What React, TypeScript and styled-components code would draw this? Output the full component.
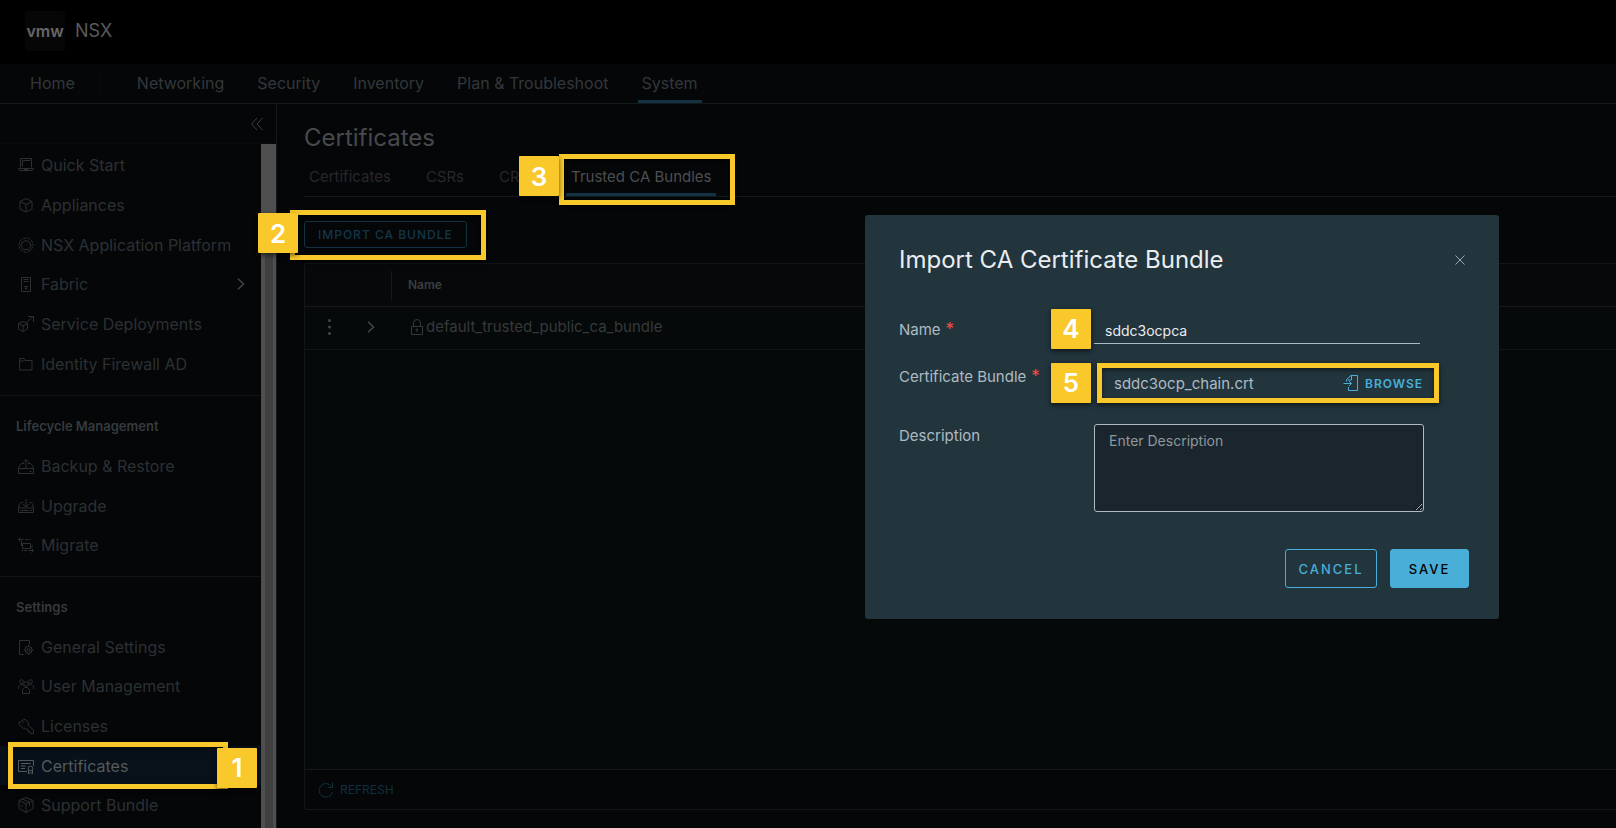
import React from 'react';
import styled, { createGlobalStyle, css } from 'styled-components';

const sans = "Inter, 'Open Sans', sans-serif";

const GlobalStyle = createGlobalStyle`
  *, *::before, *::after { box-sizing: border-box; }
  body {
    margin: 0;
    background: #050608;
    color: #32383a;
    font-family: ${sans};
    font-size: 15px;
    line-height: 24px;
    overflow: hidden;
  }
  button, input, textarea { font-family: inherit; }
  a { color: inherit; text-decoration: none; }
`;

/* ---------- shell ---------- */

const Page = styled.div`
  position: relative;
  display: flex;
  flex-direction: column;
  height: 100vh;
`;

const TopBar = styled.header`
  flex: none;
  display: flex;
  align-items: center;
  gap: 10px;
  height: 64px;
  padding: 0 25px 2px;
  background: #000;
`;

const Logo = styled.span`
  display: flex;
  align-items: center;
  justify-content: center;
  width: 40px;
  height: 40px;
  border-radius: 3px;
  background: #060606;
  color: #686868;
  font-size: 16px;
  font-weight: 600;
`;

const Product = styled.span`
  color: #5a5a5a;
  font-size: 18px;
`;

const MainNav = styled.nav`
  flex: none;
  display: flex;
  gap: 25px;
  height: 40px;
  padding: 0 26px;
  border-bottom: 1px solid #15191c;
`;

const NavLink = styled.a<{ $active?: boolean; $home?: boolean }>`
  padding: 7px 4px 0;
  font-size: 16px;
  line-height: 24px;
  border-bottom: 3px solid ${(p) => (p.$active ? '#133344' : 'transparent')};
  ${(p) =>
    p.$home &&
    css`
      position: relative;
      margin-right: 29px;
      &::after {
        content: '';
        position: absolute;
        right: -22px;
        top: 11px;
        width: 1px;
        height: 18px;
        background: #0a0c0e;
      }
    `}
`;

const Body = styled.div`
  flex: 1;
  min-height: 0;
  display: flex;
`;

/* ---------- side bar ---------- */

const SideBar = styled.aside`
  flex: none;
  display: flex;
  flex-direction: column;
  width: 277px;
  border-right: 1px solid #15191c;
`;

const CollapseBar = styled.div`
  flex: none;
  display: flex;
  align-items: center;
  justify-content: flex-end;
  height: 40px;
  padding-right: 12px;
  border-bottom: 1px solid #080b0c;
`;

const IconButton = styled.button`
  display: flex;
  padding: 0;
  border: 0;
  background: none;
  color: inherit;
`;

const SideScroll = styled.div`
  flex: 1;
  min-height: 0;
  display: flex;
  overflow: hidden;
`;

const SideList = styled.nav`
  flex: 1;
  padding-top: 1px;
`;

const ScrollTrack = styled.div`
  flex: none;
  width: 15px;
  padding: 90px 3px 0 4px;
  background: #4f4f4f;
`;

const ScrollThumb = styled.div`
  height: 100%;
  background: #3f3f3f;
`;

const Group = styled.section`
  & + & {
    margin-top: 11px;
    padding-top: 18px;
    border-top: 1px solid #121517;
  }
`;

const GroupTitle = styled.h2`
  margin: 0 0 8px;
  padding-left: 16px;
  color: #353b3e;
  font-size: 13px;
  font-weight: 600;
  line-height: 24px;
`;

const GroupItems = styled.div<{ $height: number }>`
  display: flex;
  flex-direction: column;
  height: ${(p) => p.$height}px;
`;

const Item = styled.a<{ $active?: boolean }>`
  position: relative;
  flex: 1;
  display: flex;
  align-items: center;
  gap: 7px;
  padding: 0 16px 0 18px;
  font-size: 16px;
  color: ${(p) => (p.$active ? '#545a5c' : '#2b3133')};
  background: ${(p) => (p.$active ? '#08101a' : 'transparent')};
`;

const ItemLabel = styled.span`
  flex: 1;
`;

/* ---------- content ---------- */

const Content = styled.main`
  flex: 1;
  min-width: 0;
  display: flex;
  flex-direction: column;
  padding: 19px 0 18px 27px;
`;

const Title = styled.h1`
  margin: 0 0 6px;
  color: #474a4c;
  font-size: 24px;
  font-weight: 400;
  line-height: 30px;
`;

const Tabs = styled.div`
  display: flex;
  gap: 25px;
  border-bottom: 1px solid #12191d;
`;

const Tab = styled.button<{ $active?: boolean }>`
  position: relative;
  height: 37px;
  padding: 1px 5px 0;
  border: 0;
  border-bottom: 3px solid ${(p) => (p.$active ? '#133344' : 'transparent')};
  background: none;
  color: ${(p) => (p.$active ? '#4c4f51' : '#25292b')};
  font-size: 15px;
  white-space: nowrap;
`;

const Toolbar = styled.div`
  display: flex;
  padding: 24px 0 15px;
`;

const ImportButton = styled.button`
  position: relative;
  height: 27px;
  padding: 0 13px;
  border: 1px solid #12303f;
  border-radius: 3px;
  background: none;
  color: #14364a;
  font-size: 12px;
  font-weight: 500;
  letter-spacing: 1px;
`;

const Grid = styled.div`
  flex: 1;
  display: flex;
  flex-direction: column;
  border: 1px solid #121618;
  border-right: 0;
  border-radius: 3px 0 0 3px;
`;

const GridBody = styled.div`
  flex: 1;
  background: #050909;
`;

const Table = styled.table`
  width: 100%;
  border-collapse: collapse;
  text-align: left;
`;

const HeadCell = styled.th<{ $control?: boolean }>`
  position: relative;
  width: ${(p) => (p.$control ? '87px' : 'auto')};
  height: 42px;
  padding: 0 0 0 16px;
  background: #06080a;
  border-bottom: 1px solid #15191b;
  color: #3a3f41;
  font-size: 12px;
  font-weight: 600;
  ${(p) =>
    p.$control &&
    css`
      &::after {
        content: '';
        position: absolute;
        right: 0;
        top: 7px;
        width: 1px;
        height: 30px;
        background: #15191b;
      }
    `}
`;

const Cell = styled.td`
  height: 43px;
  padding: 0 0 1px 19px;
  border-bottom: 1px solid #121618;
  color: #35393b;
`;

const CellRow = styled.div<{ $gap: number }>`
  display: flex;
  align-items: center;
  gap: ${(p) => p.$gap}px;
`;

const GridFooter = styled.div`
  flex: none;
  display: flex;
  align-items: center;
  height: 40px;
  padding-left: 13px;
  border-top: 1px solid #15191b;
`;

const RefreshButton = styled.button`
  display: flex;
  align-items: center;
  gap: 6px;
  padding: 0;
  border: 0;
  background: none;
  color: #10303f;
  font-size: 12px;
`;

/* ---------- dialog ---------- */

const Dialog = styled.form`
  position: absolute;
  top: 215px;
  right: 117px;
  width: 634px;
  padding: 30px 30px 31px 34px;
  border-radius: 3px;
  background: #22343c;
  color: #adbbc4;
`;

const DialogHeader = styled.div`
  display: flex;
  align-items: center;
  justify-content: space-between;
  height: 30px;
  padding-right: 3px;
  margin-bottom: 43px;
`;

const DialogTitle = styled.h2`
  margin: 0;
  color: #eaedf0;
  font-size: 24px;
  font-weight: 400;
  line-height: 30px;
`;

const Field = styled.div<{ $space: number }>`
  display: grid;
  grid-template-columns: 195px 330px;
  align-items: start;
  margin-bottom: ${(p) => p.$space}px;
`;

const Label = styled.label`
  font-size: 15px;
  white-space: nowrap;
`;

const Required = styled.span`
  margin-left: 5px;
  color: #f54f47;
  font-size: 17px;
  line-height: 1;
`;

const Control = styled.div`
  position: relative;
  display: flex;
`;

const TextInput = styled.input`
  width: 326px;
  height: 26px;
  padding: 0 11px 1px;
  border: 0;
  border-bottom: 1px solid #adbbc4;
  outline: 0;
  background: none;
  color: #e9ecef;
  font-size: 14px;
`;

const FileControl = styled(Control)`
  align-items: center;
  height: 24px;
  margin-top: 6px;
  padding: 0 1px 0 20px;
`;

const FileName = styled.input`
  flex: 1;
  min-width: 0;
  padding: 0;
  border: 0;
  outline: 0;
  background: none;
  color: #adbbc4;
  font-size: 15px;
`;

const BrowseButton = styled.button`
  display: flex;
  align-items: center;
  gap: 6px;
  padding: 0;
  border: 0;
  background: none;
  color: #49afd9;
  font-size: 12px;
  font-weight: 600;
  letter-spacing: 1px;
`;

const TextArea = styled.textarea`
  width: 330px;
  height: 88px;
  padding: 6px 14px;
  border: 1px solid #adbbc4;
  border-radius: 3px;
  outline: 0;
  background: #1b252e;
  color: #e9ecef;
  font-size: 14px;
  line-height: 20px;
  color-scheme: dark;
  &::placeholder { color: #8d979c; }
`;

const Actions = styled.div`
  display: flex;
  justify-content: flex-end;
  gap: 13px;
`;

const ActionButton = styled.button<{ $primary?: boolean }>`
  height: 39px;
  min-width: ${(p) => (p.$primary ? 79 : 92)}px;
  padding: 0;
  border: 1px solid #49afd9;
  border-radius: 3px;
  background: ${(p) => (p.$primary ? '#49afd9' : 'transparent')};
  color: ${(p) => (p.$primary ? '#000' : '#49afd9')};
  font-size: 13px;
  font-weight: 500;
  letter-spacing: 2px;
`;

/* ---------- step markers ---------- */

const Frame = styled.span<{ $inset: string }>`
  position: absolute;
  inset: ${(p) => p.$inset};
  z-index: 1;
  border: 5px solid #f9c82b;
  box-shadow: 0 2px 5px rgba(0, 0, 0, 0.6), inset 0 2px 4px rgba(0, 0, 0, 0.5);
  pointer-events: none;
`;

const Step = styled.span<{ $left: string; $top: string }>`
  position: absolute;
  left: ${(p) => p.$left};
  top: ${(p) => p.$top};
  z-index: 2;
  display: flex;
  align-items: center;
  justify-content: center;
  width: 40px;
  height: 40px;
  border-radius: 1px;
  background: #f9c82b;
  box-shadow: 0 2px 5px rgba(0, 0, 0, 0.6);
  color: #fff;
  font-size: 26px;
  font-weight: 600;
  letter-spacing: 0;
`;

/* ---------- icons ---------- */

const Svg = ({ children }: { children: React.ReactNode }) => (
  <svg width="16" height="16" viewBox="0 0 16 16" fill="none" stroke="currentColor" strokeWidth="1" aria-hidden="true">
    {children}
  </svg>
);

const icons = {
  laptop: (
    <Svg>
      <path d="M2.5 10.500v-9h11v9M4.500 9V3.500H12M.500 11.500h15v1l-1 1h-13l-1-1zM6 12.500h4" />
    </Svg>
  ),
  cube: (
    <Svg>
      <path d="M8 1.500l6 3v7.500l-6 3-6-3V4.500zM2 4.500l6 3 6-3M8 7.500V15" />
    </Svg>
  ),
  platform: (
    <Svg>
      <path d="M5.500 1.200h5l3.700 3 1.200 4.600-2.300 4.200-4.200 2.200H7l-4.200-2.200L.600 8.800l1.200-4.600z" strokeDasharray="3 1" />
      <path d="M8 3.500l4 2 1 3.700-2.500 3.300h-5L3 9.200l1-3.700z" />
    </Svg>
  ),
  host: (
    <Svg>
      <path d="M3.500 1.500h9v14h-9zM5.500 3.500h5M5.500 5.500h5M6 10.500h4M8 11v3M7 12.500h2" />
    </Svg>
  ),
  deploy: (
    <Svg>
      <path d="M5 5.500l4.500 2v5.500l-4.500 2.500L.500 13V7.500zM.500 7.500L5 10l4.500-2.500M5 10v5.500M8.500 6.500l6.500-6M10 .500h5.500V6" />
    </Svg>
  ),
  folder: (
    <Svg>
      <path d="M1.500 14V2.500h4.500l1.500 2h6.500V14zM1.500 5h4l1-1" />
    </Svg>
  ),
  backup: (
    <Svg>
      <path d="M6 5.500H3.500L1.500 7.500l-1 3v5h15v-5l-1-3-2-2H10M.500 10.500h15M8 10.500V1.500M5 4.500l3-3 3 3M11.500 13.500h2" />
    </Svg>
  ),
  upgrade: (
    <Svg>
      <path d="M5 4.500H3L1.500 6l-1 3.500v5h15v-5l-1-3.500L13 4.500h-2M.500 10h15M8 1v7.500M5 6l3 3 3-3M2.500 12.500h8M12 12.500h2" />
    </Svg>
  ),
  migrate: (
    <Svg>
      <path d="M4.500 6.500h8v5h-8zM3.500 4v5M.500 2.500h5M7 2.500h3M11 2.500h1.500M2.500.500l-2 2 2 2M15.500 13.500h-5M9 13.500H6M5 13.500H3.500M13.500 11.500l2 2-2 2M14 8v3" />
    </Svg>
  ),
  settings: (
    <Svg>
      <path d="M5.500 15.500h-4v-14h10v4" />
      <circle cx="10.500" cy="11" r="1.500" />
      <circle cx="10.500" cy="11" r="3.500" />
      <path d="M10.500 6v2M10.500 14v2M5.800 11h2M13.500 11h2M7.200 7.700l1 1M12.800 13.300l1 1M7.200 14.300l1-1M12.800 8.700l1-1" />
    </Svg>
  ),
  users: (
    <Svg>
      <path d="M4.500 15.500v-4l2-2h3l2 2v4zM.500 11V8.500l2-2h2l1 1M15.500 11V8.500l-2-2h-2l-1 1" />
      <circle cx="8" cy="6" r="2.300" />
      <circle cx="3.500" cy="3.500" r="1.800" />
      <circle cx="12.500" cy="3.500" r="1.800" />
    </Svg>
  ),
  key: (
    <Svg>
      <path d="M6 1.500h1.500l3 3.500-.500 2 5.500 5v3.500h-3L12 14h-1.500v-2H9l-1.500-2-2 .500-5-4.500V5zM4 5.500l2-2" />
    </Svg>
  ),
  certificate: (
    <Svg>
      <path d="M9 13.500H.500v-11h15V8M3 5.500h9.500M3 8h4.500M3 10.500h4M10.500 12v4l2-1.500 2 1.500v-4" />
      <circle cx="12.500" cy="10.500" r="2.300" />
    </Svg>
  ),
  bundle: (
    <Svg>
      <path d="M8 .500l7 3v8l-7 4-7-4v-8zM1 3.500l7 3.500 7-3.500M8 7v8.500M4.500 2l7 3.500V9M3 8.500l2 1" />
    </Svg>
  ),
};

const groups: { title?: string; height: number; items: [keyof typeof icons, string][] }[] = [
  {
    height: 239,
    items: [
      ['laptop', 'Quick Start'],
      ['cube', 'Appliances'],
      ['platform', 'NSX Application Platform'],
      ['host', 'Fabric'],
      ['deploy', 'Service Deployments'],
      ['folder', 'Identity Firewall AD'],
    ],
  },
  {
    title: 'Lifecycle Management',
    height: 119,
    items: [
      ['backup', 'Backup & Restore'],
      ['upgrade', 'Upgrade'],
      ['migrate', 'Migrate'],
    ],
  },
  {
    title: 'Settings',
    height: 198,
    items: [
      ['settings', 'General Settings'],
      ['users', 'User Management'],
      ['key', 'Licenses'],
      ['certificate', 'Certificates'],
      ['bundle', 'Support Bundle'],
    ],
  },
];

const Chevron = () => (
  <svg width="8" height="12" viewBox="0 0 8 12" fill="none" stroke="#42474a" strokeWidth="1.500" aria-hidden="true">
    <path d="M1 .700L6.500 6 1 11.300" />
  </svg>
);

export default function App() {
  return (
    <Page>
      <GlobalStyle />
      <TopBar>
        <Logo>vmw</Logo>
        <Product>NSX</Product>
      </TopBar>
      <MainNav aria-label="Main">
        <NavLink href="#home" $home>Home</NavLink>
        {['Networking', 'Security', 'Inventory', 'Plan & Troubleshoot', 'System'].map((name) => (
          <NavLink key={name} href="#section" $active={name === 'System'}>{name}</NavLink>
        ))}
      </MainNav>

      <Body>
        <SideBar>
          <CollapseBar>
            <IconButton type="button" aria-label="Collapse">
              <svg width="14" height="14" viewBox="0 0 14 14" fill="none" stroke="#3a4042" aria-hidden="true">
                <path d="M7 1L1.500 7 7 13M12.500 1L7 7l5.500 6" />
              </svg>
            </IconButton>
          </CollapseBar>
          <SideScroll>
            <SideList aria-label="System">
              {groups.map((group, i) => (
                <Group key={i}>
                  {group.title && <GroupTitle>{group.title}</GroupTitle>}
                  <GroupItems $height={group.height}>
                    {group.items.map(([icon, name]) => (
                      <Item key={name} href="#item" $active={name === 'Certificates'}>
                        {icons[icon]}
                        <ItemLabel>{name}</ItemLabel>
                        {name === 'Fabric' && <Chevron />}
                        {name === 'Certificates' && (
                          <>
                            <Frame $inset="-4px 33px -4px 8px" />
                            <Step $left="217px" $top="2px">1</Step>
                          </>
                        )}
                      </Item>
                    ))}
                  </GroupItems>
                </Group>
              ))}
            </SideList>
            <ScrollTrack>
              <ScrollThumb />
            </ScrollTrack>
          </SideScroll>
        </SideBar>

        <Content>
          <Title>Certificates</Title>
          <Tabs role="tablist">
            <Tab type="button" role="tab">Certificates</Tab>
            <Tab type="button" role="tab">CSRs</Tab>
            <Tab type="button" role="tab">CRLs</Tab>
            <Tab type="button" role="tab" aria-selected="true" $active>
              Trusted CA Bundles
              <Frame $inset="-5px -19px -12px -7px" />
              <Step $left="-47px" $top="-3px">3</Step>
            </Tab>
          </Tabs>
          <Toolbar>
            <ImportButton type="button">
              IMPORT CA BUNDLE
              <Frame $inset="-12px -20px -13px -15px" />
              <Step $left="-47px" $top="-9px">2</Step>
            </ImportButton>
          </Toolbar>
          <Grid>
            <GridBody>
              <Table>
                <thead>
                  <tr>
                    <HeadCell $control aria-label="Actions" />
                    <HeadCell>Name</HeadCell>
                  </tr>
                </thead>
                <tbody>
                  <tr>
                    <Cell>
                      <CellRow $gap={33}>
                        <IconButton type="button" aria-label="Row actions">
                          <svg width="10" height="18" viewBox="0 0 10 18" fill="#42474a" aria-hidden="true">
                            <circle cx="5.500" cy="2.500" r="1.500" />
                            <circle cx="5.500" cy="9" r="1.500" />
                            <circle cx="5.500" cy="15.500" r="1.500" />
                          </svg>
                        </IconButton>
                        <IconButton type="button" aria-label="Expand row">
                          <Chevron />
                        </IconButton>
                      </CellRow>
                    </Cell>
                    <Cell>
                      <CellRow $gap={3}>
                        <svg width="12" height="16" viewBox="0 0 12 16" fill="none" stroke="currentColor" aria-hidden="true">
                          <path d="M.500 7.500h11v8H.500zM2.500 7.500V4a3.500 3.500 0 0 1 7 0v3.500M6 10.500v2.500" />
                          <circle cx="6" cy="10.500" r=".700" />
                        </svg>
                        default_trusted_public_ca_bundle
                      </CellRow>
                    </Cell>
                  </tr>
                </tbody>
              </Table>
            </GridBody>
            <GridFooter>
              <RefreshButton type="button">
                <Svg>
                  <path d="M14.500 10A6.800 6.800 0 1 1 13.500 4.500M14.500.500v5h-5" />
                </Svg>
                REFRESH
              </RefreshButton>
            </GridFooter>
          </Grid>
        </Content>
      </Body>

      <Dialog role="dialog" aria-labelledby="dialog-title">
        <DialogHeader>
          <DialogTitle id="dialog-title">Import CA Certificate Bundle</DialogTitle>
          <IconButton type="button" aria-label="Close">
            <svg width="12" height="12" viewBox="0 0 12 12" fill="none" stroke="#9aa7ae" aria-hidden="true">
              <path d="M1.500 1.500l9 9M10.500 1.500l-9 9" />
            </svg>
          </IconButton>
        </DialogHeader>
        <Field $space={21}>
          <Label htmlFor="name">Name<Required>*</Required></Label>
          <Control>
            <TextInput id="name" defaultValue="sddc3ocpca" />
            <Step $left="-43px" $top="-9px">4</Step>
          </Control>
        </Field>
        <Field $space={29}>
          <Label htmlFor="bundle">Certificate Bundle<Required>*</Required></Label>
          <FileControl>
            <FileName id="bundle" readOnly value="sddc3ocp_chain.crt" />
            <BrowseButton type="button">
              <Svg>
                <path d="M5.500 12v3.500h9V.500H8L3.500 4.500v2M8.500 1v4h-4M.500 8.500h8M6 6l2.500 2.500L6 11" />
              </Svg>
              BROWSE
            </BrowseButton>
            <Frame $inset="-8px -15px -8px 3px" />
            <Step $left="-43px" $top="-8px">5</Step>
          </FileControl>
        </Field>
        <Field $space={37}>
          <Label htmlFor="description">Description</Label>
          <TextArea id="description" placeholder="Enter Description" />
        </Field>
        <Actions>
          <ActionButton type="button">CANCEL</ActionButton>
          <ActionButton type="submit" $primary>SAVE</ActionButton>
        </Actions>
      </Dialog>
    </Page>
  );
}
